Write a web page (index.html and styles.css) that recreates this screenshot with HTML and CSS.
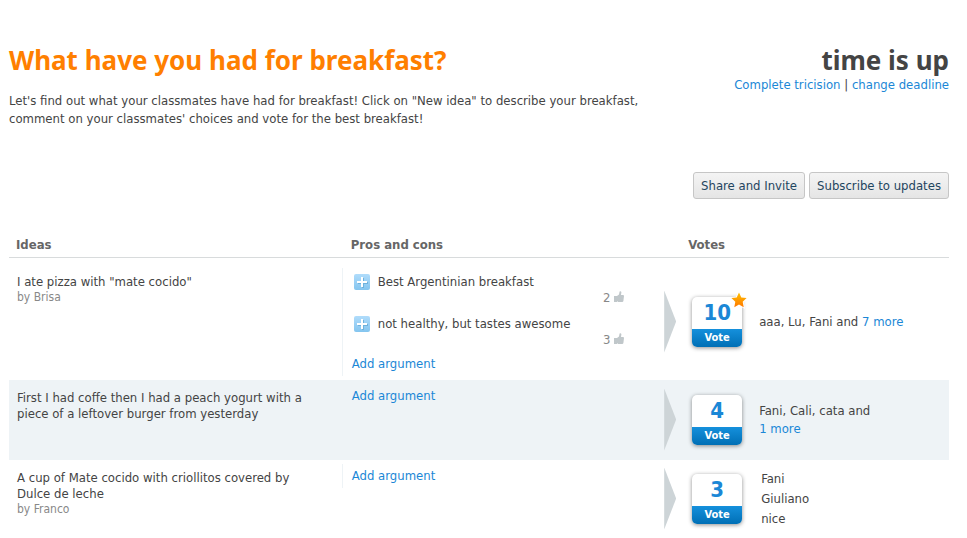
FILE: index.html
```html
<!DOCTYPE html>
<html lang="en">
<head>
<meta charset="utf-8">
<title>What have you had for breakfast?</title>
<link rel="stylesheet" href="styles.css">
</head>
<body>
<svg class="defs" aria-hidden="true">
  <defs>
    <linearGradient id="plus-fill" x1="0" y1="0" x2="0" y2="1">
      <stop offset="0" stop-color="#b0dcfb"/><stop offset="1" stop-color="#84c5ef"/>
    </linearGradient>
    <linearGradient id="star-fill" x1="0" y1="0" x2="0" y2="1">
      <stop offset="0" stop-color="#ffc000"/><stop offset="1" stop-color="#ff7800"/>
    </linearGradient>
    <symbol id="plus" viewBox="0 0 16 16">
      <rect width="16" height="16" rx="2" fill="url(#plus-fill)"/>
      <path d="M8 4h2v4h4v2h-4v4H8v-4H4V8h4z" fill="#6fb2dc"/>
      <path d="M7 3h2v4h4v2H9v4H7V9H3V7h4z" fill="#fff"/>
    </symbol>
    <symbol id="thumb" viewBox="0 0 10 11">
      <path d="M0 5h3v6H0z" fill="#c0c7ca"/>
      <path d="M3 5L5 3.4 5.6.6Q7-.4 7.4 1.2L7 4H9q1 0 1 1L9.4 10q-.2 1-1.2 1H4L3 10z" fill="#c0c7ca"/>
    </symbol>
  </defs>
</svg>
<header class="top">
  <div class="question">
    <h1>What have you had for breakfast?</h1>
    <p>Let's find out what your classmates have had for breakfast! Click on "New idea" to describe your breakfast, comment on your classmates' choices and vote for the best breakfast!</p>
  </div>
  <div class="deadline">
    <h2>time is up</h2>
    <div><a href="#">Complete tricision</a> | <a href="#">change deadline</a></div>
  </div>
</header>
<div class="actions">
  <button type="button">Share and Invite</button>
  <button type="button">Subscribe to updates</button>
</div>
<table class="ideas">
  <colgroup><col class="col-idea"><col class="col-args"><col class="col-votes"></colgroup>
  <thead>
    <tr><th scope="col">Ideas</th><th scope="col">Pros and cons</th><th scope="col">Votes</th></tr>
  </thead>
  <tbody>
    <tr class="first">
      <td class="idea">I ate pizza with "mate cocido"<div class="author">by Brisa</div></td>
      <td class="args">
        <div class="arg-box">
          <ul>
            <li><svg class="plus"><use href="#plus"/></svg><span>Best Argentinian breakfast</span><span class="likes">2 <svg class="thumb"><use href="#thumb"/></svg></span></li>
            <li><svg class="plus"><use href="#plus"/></svg><span>not healthy, but tastes awesome</span><span class="likes">3 <svg class="thumb"><use href="#thumb"/></svg></span></li>
          </ul>
          <a href="#">Add argument</a>
        </div>
      </td>
      <td class="votes">
        <div class="vote-row">
          <span class="arrow"></span>
          <button type="button" class="vote"><span class="count">10</span><span class="label">Vote</span>
            <svg class="star" viewBox="0 0 16 16"><path d="M8 .5l2.3 4.9 5.3.7-3.9 3.7 1 5.4L8 12.6l-4.7 2.6 1-5.4L.4 6.1l5.3-.7z" fill="url(#star-fill)" stroke="#fff" stroke-width="2" paint-order="stroke"/></svg></button>
          <div class="voters">aaa, Lu, Fani and <a href="#">7 more</a></div>
        </div>
      </td>
    </tr>
    <tr class="shaded">
      <td class="idea">First I had coffe then I had a peach yogurt with a piece of a leftover burger from yesterday</td>
      <td class="args"><div class="arg-box"><a href="#">Add argument</a></div></td>
      <td class="votes">
        <div class="vote-row">
          <span class="arrow"></span>
          <button type="button" class="vote"><span class="count">4</span><span class="label">Vote</span></button>
          <div class="voters">Fani, Cali, cata and<br><a href="#">1 more</a></div>
        </div>
      </td>
    </tr>
    <tr>
      <td class="idea">A cup of Mate cocido with criollitos covered by Dulce de leche<div class="author">by Franco</div></td>
      <td class="args"><div class="arg-box"><a href="#">Add argument</a></div></td>
      <td class="votes">
        <div class="vote-row">
          <span class="arrow"></span>
          <button type="button" class="vote"><span class="count">3</span><span class="label">Vote</span></button>
          <ul class="voters voter-list"><li>Fani</li><li>Giuliano</li><li>nice</li></ul>
        </div>
      </td>
    </tr>
  </tbody>
</table>
</body>
</html>
```
FILE: styles.css
```css
* { box-sizing: border-box; }
body {
  margin: 0;
  padding: 44px 18px 0 9px;
  background: #fff;
  color: #444;
  font: 13px/16px "DejaVu Sans Condensed", "Noto Sans", sans-serif;
}
h1, h2, p, ul { margin: 0; padding: 0; }
ul { list-style: none; }
a { color: #1b87d6; text-decoration: none; }
button { font-family: inherit; cursor: pointer; }
.defs { position: absolute; width: 0; height: 0; }

.top { display: flex; justify-content: space-between; min-height: 128px; }
.question { max-width: 640px; }
h1, h2 { font: bold 26px/32px "Noto Sans", sans-serif; }
h1 { color: #ff7f00; }
.question p { margin-top: 16px; line-height: 18px; }
.deadline { text-align: right; white-space: nowrap; }
.deadline div { line-height: 18px; }

.actions { display: flex; justify-content: flex-end; gap: 4px; }
.actions button {
  height: 27px;
  padding: 0 7px;
  border: 1px solid #c6c6c6;
  border-radius: 3px;
  background: linear-gradient(#f4f4f4, #e5e5e5);
  color: #1f4560;
  font-size: 13px;
}

.ideas { width: 100%; margin-top: 36px; border-collapse: collapse; table-layout: fixed; }
.col-idea { width: 35.4%; }
.col-args { width: 34.3%; }
.col-votes { width: 30.3%; }
th { height: 22px; padding: 0 0 2px 9px; border-bottom: 1px solid #d8dbdc; color: #666; text-align: left; }
th:first-child { padding-left: 7px; }
th:last-child { padding-left: 24px; }
td { padding: 0; vertical-align: top; }
.shaded { background: #eef3f6; }
.shaded td { height: 80px; }
.idea { padding: 10px 36px 0 8px; }
.author { color: #888; font-size: 12px; line-height: 15px; }
.args { padding: 4px 0; }
.first .idea { padding-top: 16px; }
.first .args { padding-top: 10px; }
.first .votes { padding-top: 6px; }
.arg-box { padding: 4px 0 4px 9px; border-left: 1px solid #eef3f6; }
.arg-box li { display: grid; grid-template-columns: 16px 1fr; column-gap: 8px; padding: 2px 40px 9px 2px; }
.plus { width: 16px; height: 16px; }
.likes { grid-column: 2; text-align: right; color: #888; line-height: 15px; }
.thumb { width: 10px; height: 11px; }
.votes { vertical-align: middle; }
.vote-row { display: flex; align-items: center; padding: 8px 0; }
.arrow { flex: none; width: 12px; height: 62px; background: #cdd4d7; clip-path: polygon(0 0, 100% 50%, 0 100%); }
.vote {
  position: relative;
  flex: none;
  display: flex;
  flex-direction: column;
  width: 50px;
  height: 50px;
  margin: 0 17px 0 16px;
  padding: 0;
  border: 0;
  border-radius: 5px;
  background: #fff;
  box-shadow: 0 1px 4px rgba(0, 0, 0, 0.45);
  font-weight: bold;
}
.count { width: 100%; color: #1b87d6; font-size: 22px; line-height: 32px; }
.label {
  width: 100%;
  border-radius: 0 0 5px 5px;
  background: linear-gradient(#1590dc, #006fb5);
  color: #fff;
  font-size: 11px;
  line-height: 18px;
}
.star { position: absolute; top: -5px; right: -5px; width: 16px; height: 16px; overflow: visible; }
.voters { line-height: 18px; }
.voter-list { padding-left: 2px; line-height: 20px; }
```
